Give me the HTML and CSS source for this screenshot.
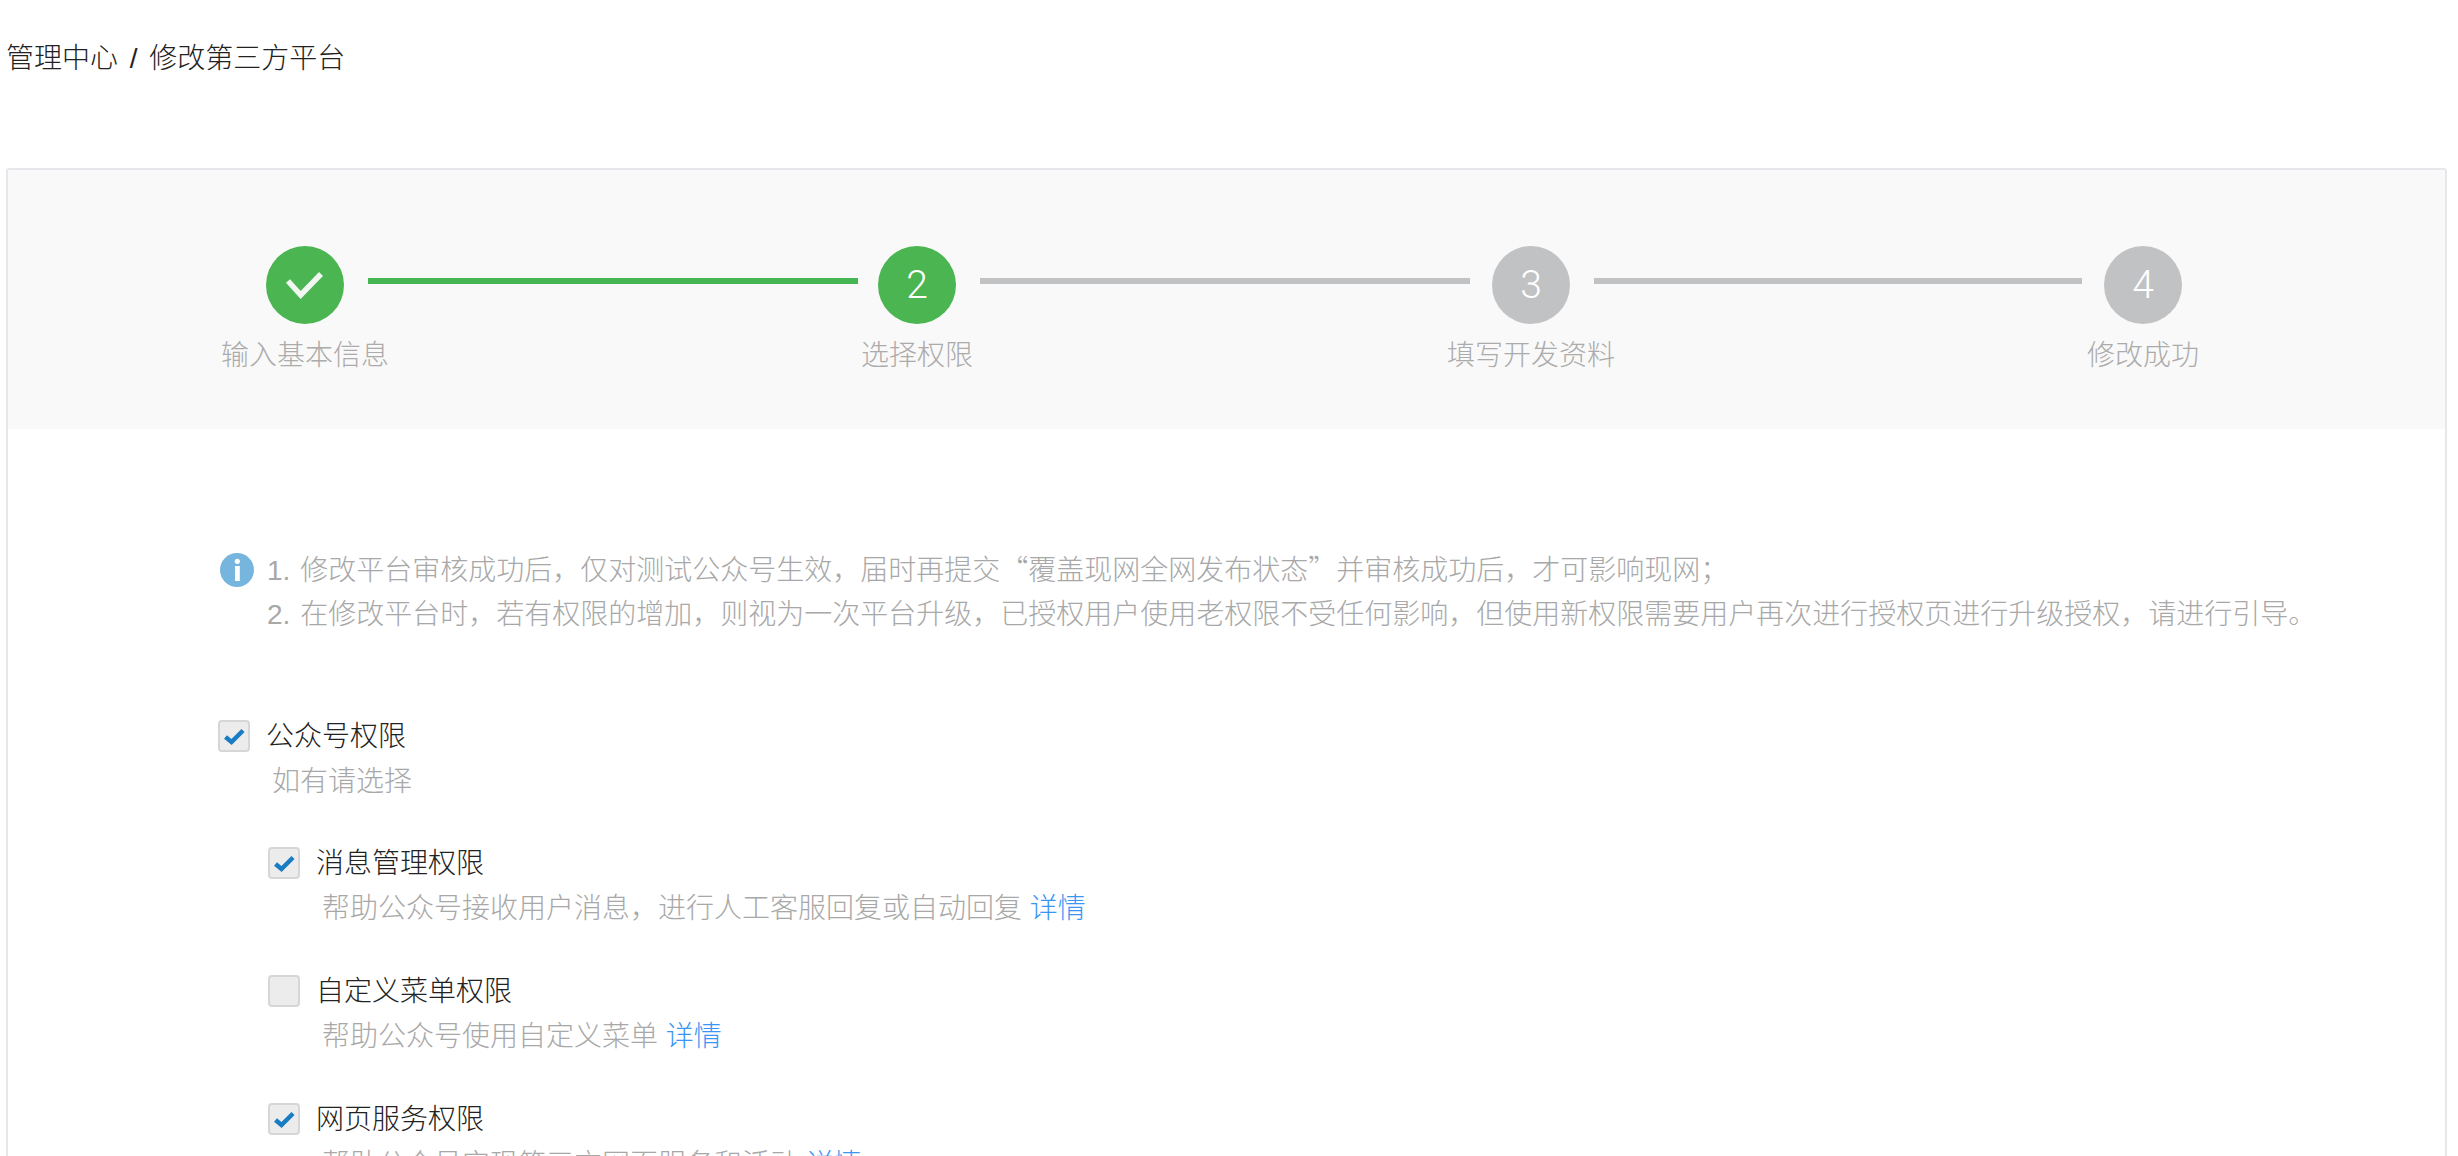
FILE: index.html
```html
<!DOCTYPE html>
<html lang="zh-CN">
<head>
<meta charset="utf-8">
<title>修改第三方平台</title>
<link rel="stylesheet" href="styles.css">
</head>
<body>
<div class="page">
  <div class="crumb">管理中心 / 修改第三方平台</div>
  <div class="card">
    <div class="steps">
      <div class="step done">
        <div class="dot"><svg class="tick" viewBox="0 0 40 32" width="40" height="32"><path d="M3 12 L15.7 26 L36 5" fill="none" stroke="#f2f6f2" stroke-width="5.5"/></svg></div>
        <div class="step-label">输入基本信息</div>
      </div>
      <div class="line on"></div>
      <div class="step done">
        <div class="dot">2</div>
        <div class="step-label">选择权限</div>
      </div>
      <div class="line mid"></div>
      <div class="step">
        <div class="dot">3</div>
        <div class="step-label">填写开发资料</div>
      </div>
      <div class="line last"></div>
      <div class="step">
        <div class="dot">4</div>
        <div class="step-label">修改成功</div>
      </div>
    </div>
    <div class="body">
      <div class="notice">
        <svg class="info" viewBox="0 0 34 34" width="34" height="34"><circle cx="17" cy="17" r="17" fill="#75b5de"/><circle cx="17.3" cy="8.3" r="2.6" fill="#fff"/><rect x="15" y="13" width="4.8" height="15" fill="#fff"/></svg>
        <div class="notice-text">
          <div>1. 修改平台审核成功后，仅对测试公众号生效，届时再提交<span class="quote">“</span>覆盖现网全网发布状态<span class="quote">”</span>并审核成功后，才可影响现网；</div>
          <div>2. 在修改平台时，若有权限的增加，则视为一次平台升级，已授权用户使用老权限不受任何影响，但使用新权限需要用户再次进行授权页进行升级授权，请进行引导。</div>
        </div>
      </div>
      <div class="perms">
        <div class="perm">
          <div class="perm-head">
            <span class="box"><svg viewBox="0 0 32 32" width="32" height="32"><path d="M7.5 17 L13.5 22 L25 10.5" fill="none" stroke="#1a7dc4" stroke-width="4.5"/></svg></span>
            <span class="perm-name">公众号权限</span>
          </div>
          <div class="perm-desc">如有请选择</div>
        </div>
        <div class="sub">
          <div class="perm">
            <div class="perm-head">
              <span class="box"><svg viewBox="0 0 32 32" width="32" height="32"><path d="M7.5 17 L13.5 22 L25 10.5" fill="none" stroke="#1a7dc4" stroke-width="4.5"/></svg></span>
              <span class="perm-name">消息管理权限</span>
            </div>
            <div class="perm-desc">帮助公众号接收用户消息，进行人工客服回复或自动回复 <a class="more">详情</a></div>
          </div>
          <div class="perm">
            <div class="perm-head">
              <span class="box"></span>
              <span class="perm-name">自定义菜单权限</span>
            </div>
            <div class="perm-desc">帮助公众号使用自定义菜单 <a class="more">详情</a></div>
          </div>
          <div class="perm">
            <div class="perm-head">
              <span class="box"><svg viewBox="0 0 32 32" width="32" height="32"><path d="M7.5 17 L13.5 22 L25 10.5" fill="none" stroke="#1a7dc4" stroke-width="4.5"/></svg></span>
              <span class="perm-name">网页服务权限</span>
            </div>
            <div class="perm-desc">帮助公众号实现第三方网页服务和活动 <a class="more">详情</a></div>
          </div>
        </div>
      </div>
    </div>
  </div>
</div>
</body>
</html>
```

FILE: styles.css
```css
* { box-sizing: border-box; }
html, body { margin: 0; height: 100%; overflow: hidden; background: #fff; }
body {
  font-family: "Liberation Sans", "Noto Sans CJK SC", sans-serif;
  font-size: 28px;
  font-weight: 300;
  color: #222;
}
.page { height: 1156px; overflow: hidden; padding: 0 11px 0 6px; }
.crumb { height: 168px; padding-top: 39px; line-height: 40px; color: #222; word-spacing: 4px; }
.card { border: 2px solid #e7e7eb; border-radius: 3px; }
.steps {
  display: flex;
  align-items: flex-start;
  height: 259px;
  padding: 76px 0 0 258px;
  background: #f9f9f9;
}
.step { width: 78px; display: flex; flex-direction: column; align-items: center; flex: none; }
.dot {
  width: 78px; height: 78px; border-radius: 50%;
  background: #c1c2c4; color: #fff;
  display: flex; align-items: center; justify-content: center;
  font-family: Roboto, "Liberation Sans", sans-serif;
  font-size: 39px; font-weight: 300;
}
.done .dot { background: #4ab551; }
.step-label { margin-top: 12px; line-height: 40px; white-space: nowrap; color: #ababab; }
.line { width: 490px; height: 6px; margin: 32px 20px 0 24px; background: #c1c2c4; flex: none; }
.line.mid { margin-right: 22px; }
.line.last { width: 488px; margin-right: 22px; }
.line.on { background: #45b653; }
.body { padding: 117px 0 0 212px; }
.notice { display: flex; gap: 13px; align-items: flex-start; line-height: 44px; color: #a8a8a8; margin-bottom: 83px; }
.info { flex: none; margin-top: 7px; }
.notice-text { white-space: nowrap; word-spacing: 2px; }
.quote { font-family: "Noto Sans CJK SC", sans-serif; }
.perms { margin-left: -2px; }
.perm-head { display: flex; align-items: center; gap: 16px; height: 32px; }
.perm-name { margin-top: -4px; }
.box {
  width: 32px; height: 32px; flex: none;
  background: #ececec; border: 2px solid #d6d6d6; border-radius: 4px;
  display: flex; align-items: center; justify-content: center;
}
.box svg { flex: none; }
.perm-desc { margin: 8px 0 0 54px; line-height: 44px; color: #a8a8a8; white-space: nowrap; }
.sub { margin-left: 50px; padding-top: 43px; display: flex; flex-direction: column; gap: 44px; }
.more { color: #3a96f5; }
```
